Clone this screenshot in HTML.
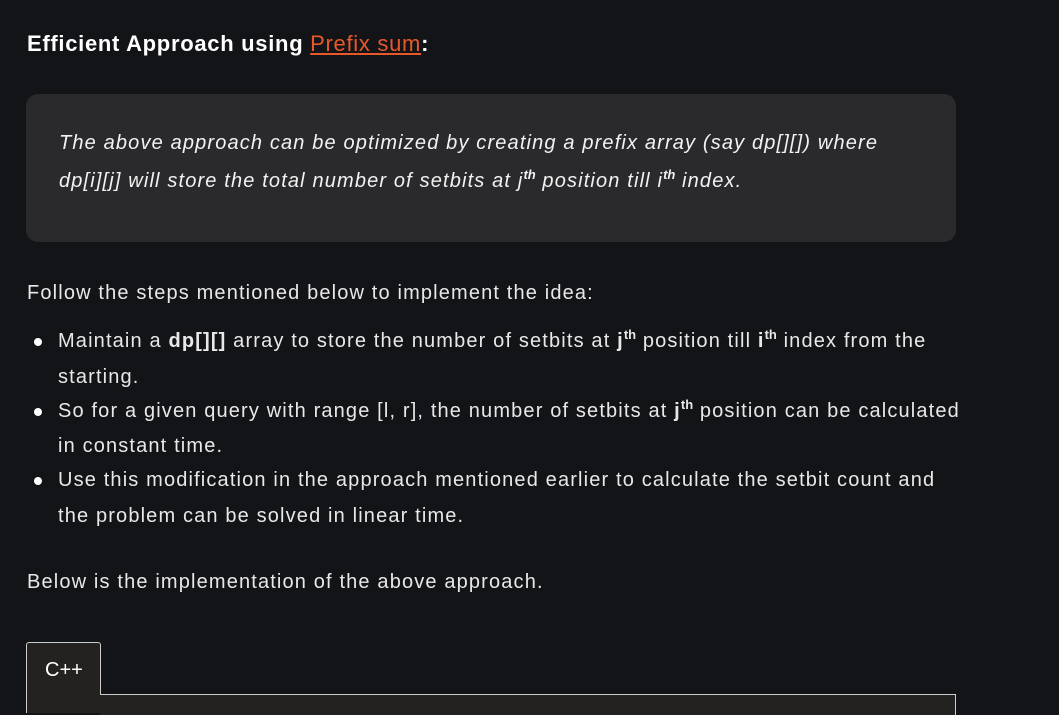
<!DOCTYPE html>
<html><head><meta charset="utf-8"><style>
body{margin:0;background:#131417;color:#e8e8e8;font-family:"Liberation Sans",sans-serif;width:1059px;height:707px;overflow:hidden;position:relative}
.a{position:absolute;white-space:nowrap;font-size:20px;letter-spacing:1.15px}
h2{position:absolute;left:27px;top:31px;margin:0;font-size:22px;font-weight:bold;color:#fff;letter-spacing:0.7px}
h2 a{color:#e8582b;text-decoration:underline;font-weight:normal}
.box{position:absolute;left:26px;top:94px;width:930px;height:148px;background:#2a2a2d;border-radius:12px}
.it{font-style:italic;color:#f2f2f2}
sup{font-size:13px;font-weight:bold;vertical-align:0;position:relative;top:-8px;letter-spacing:0}
.dot{position:absolute;left:34px;width:8px;height:8px;border-radius:50%;background:#fff}
.tab{position:absolute;left:26px;top:642px;width:73px;height:70px;background:#232220;border:1px solid #ccc;border-bottom:none;border-radius:3px 3px 0 0}
.code{position:absolute;left:100px;top:694px;width:855px;height:20px;background:#232220;border-top:1px solid #ccc;border-right:1px solid #ccc}
</style></head><body>
<h2>Efficient Approach using <a>Prefix sum</a>:</h2>
<div class="box"></div>
<div class="a it" style="left:59px;top:132px">The above approach can be optimized by creating a prefix array (say dp[][]) where</div>
<div class="a it" style="left:59px;top:170px">dp[i][j] will store the total number of setbits at j<sup>th</sup> position till i<sup>th</sup> index.</div>
<div class="a" style="left:27px;top:282px">Follow the steps mentioned below to implement the idea:</div>
<div class="dot" style="top:338px"></div>
<div class="a" style="left:58px;top:330px">Maintain a <b>dp[][]</b> array to store the number of setbits at <b>j<sup>th</sup></b> position till <b>i<sup>th</sup></b> index from the</div>
<div class="a" style="left:58px;top:366px">starting.</div>
<div class="dot" style="top:408px"></div>
<div class="a" style="left:58px;top:400px">So for a given query with range [l, r], the number of setbits at <b>j<sup>th</sup></b> position can be calculated</div>
<div class="a" style="left:58px;top:435px">in constant time.</div>
<div class="dot" style="top:477px"></div>
<div class="a" style="left:58px;top:469px">Use this modification in the approach mentioned earlier to calculate the setbit count and</div>
<div class="a" style="left:58px;top:505px">the problem can be solved in linear time.</div>
<div class="a" style="left:27px;top:571px">Below is the implementation of the above approach.</div>
<div class="tab"></div>
<div class="code"></div>
<div class="a" style="left:45px;top:659px;color:#fff;letter-spacing:0">C++</div>
</body></html>
